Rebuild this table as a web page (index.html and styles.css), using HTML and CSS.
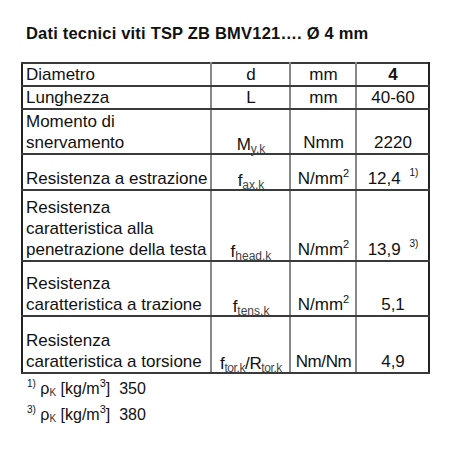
FILE: index.html
```html
<!DOCTYPE html>
<html>
<head>
<meta charset="utf-8">
<link rel="stylesheet" href="styles.css">
</head>
<body>
<div class="page">
  <h1 class="title">Dati tecnici viti TSP ZB BMV121…. Ø 4 mm</h1>
  <table class="data">
    <colgroup>
      <col class="c1"><col class="c2"><col class="c3"><col class="c4">
    </colgroup>
    <tr class="r1">
      <td class="lbl">Diametro</td><td class="ctr">d</td><td class="ctr">mm</td><td class="ctr b">4</td>
    </tr>
    <tr class="r2">
      <td class="lbl">Lunghezza</td><td class="ctr">L</td><td class="ctr">mm</td><td class="ctr">40-60</td>
    </tr>
    <tr class="r3">
      <td class="lbl">Momento di<br>snervamento</td><td class="ctr"><span class="sym">M<sub>y,k</sub></span></td><td class="ctr">Nmm</td><td class="ctr">2220</td>
    </tr>
    <tr class="r4">
      <td class="lbl">Resistenza a estrazione</td><td class="ctr"><span class="sym">f<sub>ax,k</sub></span></td><td class="ctr">N/mm<sup>2</sup></td><td class="ctr">12,4 <sup class="note">1)</sup></td>
    </tr>
    <tr class="r5">
      <td class="lbl">Resistenza<br>caratteristica alla<br>penetrazione della testa</td><td class="ctr"><span class="sym">f<sub>head,k</sub></span></td><td class="ctr">N/mm<sup>2</sup></td><td class="ctr">13,9 <sup class="note">3)</sup></td>
    </tr>
    <tr class="r6">
      <td class="lbl">Resistenza<br>caratteristica a trazione</td><td class="ctr"><span class="sym">f<sub>tens,k</sub></span></td><td class="ctr">N/mm<sup>2</sup></td><td class="ctr">5,1</td>
    </tr>
    <tr class="r7">
      <td class="lbl">Resistenza<br>caratteristica a torsione</td><td class="ctr tight"><span class="sym">f<sub>tor,k</sub>/R<sub>tor.k</sub></span></td><td class="ctr tight">Nm/Nm</td><td class="ctr">4,9</td>
    </tr>
  </table>
  <div class="notes">
    <div class="fn"><sup class="fnmark">1)</sup> ρ<sub class="k">K</sub> [kg/m<sup>3</sup>]&nbsp; 350</div>
    <div class="fn"><sup class="fnmark">3)</sup> ρ<sub class="k">K</sub> [kg/m<sup>3</sup>]&nbsp; 380</div>
  </div>
</div>
</body>
</html>
```
FILE: styles.css
```css
html, body {
  margin: 0;
  padding: 0;
  background: #fff;
}
body {
  font-family: "Liberation Sans", Arial, sans-serif;
  color: #111;
}
.page {
  padding: 24px 0 0 21px;
}
.title {
  margin: 0 0 0 5px;
  font-size: 16.5px;
  line-height: 18px;
  letter-spacing: 0.2px;
  font-weight: bold;
  color: #111;
}
.data {
  margin-top: 20px;
  border-collapse: collapse;
  border: 2px solid #222;
  font-size: 17px;
  width: 407px;
  table-layout: fixed;
}
.c1 { width: 189px; }
.c2 { width: 79px; }
.c3 { width: 66px; }
.c4 { width: 73px; }
.data td {
  box-sizing: border-box;
  border-top: 2px solid #3a3a3a;
  border-bottom: 2px solid #3a3a3a;
  border-left: 2px solid #888;
  border-right: 2px solid #888;
  padding: 0 2px 0 3px;
  line-height: 21px;
  vertical-align: bottom;
  white-space: nowrap;
}
.data td.lbl { border-left: 2px solid #222; }
.data td:last-child { border-right: 2px solid #222; }
.ctr { text-align: center; }
.b { font-weight: bold; }
.tight { padding-left: 0; padding-right: 0; letter-spacing: -0.4px; }
.r1 td, .r2 td { height: 22px; }
.r3 td { height: 45px; }
.r4 td { height: 36px; }
.r5 td { height: 71px; }
.r6 td { height: 55px; }
.r7 td { height: 57px; }
.sym {
  line-height: 0;
  vertical-align: -2px;
}
sub {
  font-size: 12px;
  line-height: 0;
  vertical-align: -3px;
  color: #444;
}
sup {
  font-size: 11px;
  line-height: 0;
  vertical-align: 7px;
}
sup.note {
  font-size: 10px;
  vertical-align: 8px;
  margin-left: 4px;
}
.notes {
  padding: 2px 0 0 6px;
}
.fn {
  font-size: 16px;
  line-height: 26px;
}
.fnmark {
  font-size: 10px;
  vertical-align: 7px;
}
sub.k {
  font-size: 10px;
  vertical-align: -2px;
  color: #333;
}
```
